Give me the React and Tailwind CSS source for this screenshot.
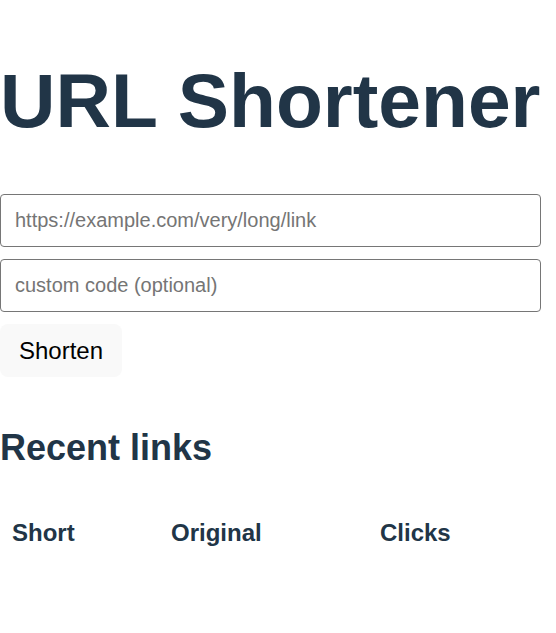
export default function App() {
  return (
    <div className="w-[541px] bg-white text-[#213547] font-['Liberation_Sans',Arial,sans-serif]">
      <h1 className="pt-[58px] mb-[52px] text-[76.8px] leading-[1.1] font-bold whitespace-nowrap">URL Shortener</h1>
      <div className="flex flex-col gap-[12px]">
        <input
          className="h-[53px] w-full rounded-[4px] border border-[#767676] px-[14px] text-[20px] text-black placeholder:text-[#757575] outline-none"
          placeholder="https://example.com/very/long/link"
        />
        <input
          className="h-[53px] w-full rounded-[4px] border border-[#767676] px-[14px] text-[20px] text-black placeholder:text-[#757575] outline-none"
          placeholder="custom code (optional)"
        />
        <div>
          <button className="h-[53px] w-[122px] rounded-[8px] bg-[#f9f9f9] text-[24px] text-black">Shorten</button>
        </div>
      </div>
      <h2 className="mt-[49px] text-[36px] leading-[1.2] font-bold">Recent links</h2>
      <div className="mt-[37px] grid grid-cols-[159px_209px_1fr] text-[24px] leading-[1.2] font-bold">
        <div className="p-[12px]">Short</div>
        <div className="p-[12px]">Original</div>
        <div className="p-[12px]">Clicks</div>
      </div>
    </div>
  );
}
